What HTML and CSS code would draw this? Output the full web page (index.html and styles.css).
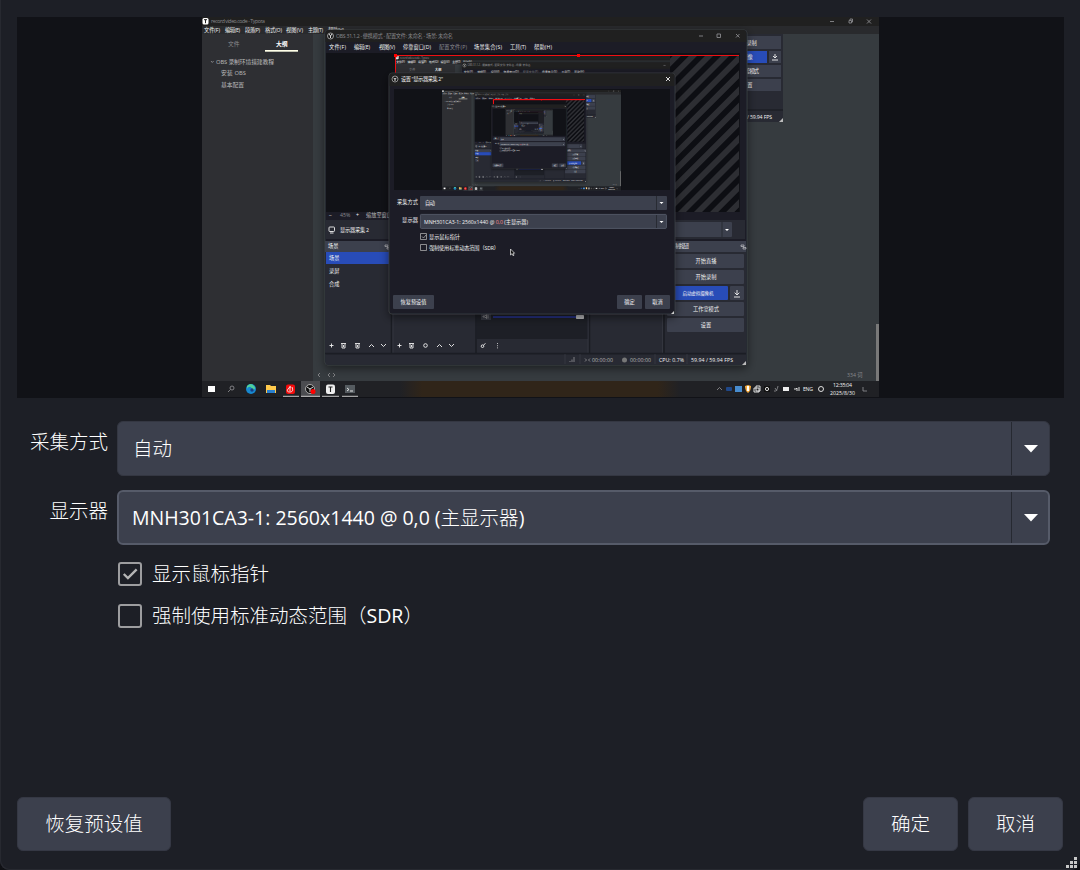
FILE: index.html
```html
<!DOCTYPE html>
<html lang="zh-CN">
<head>
<meta charset="utf-8">
<title>显示器采集</title>
<link rel="stylesheet" href="styles.css">
</head>
<body>
<main class="dialog">
<svg class="preview" viewBox="17 17 1047 381" role="img" aria-label="预览">
<defs>
<pattern id="hatch" width="11.4" height="11.4" patternUnits="userSpaceOnUse" patternTransform="rotate(45 670 55)"><rect width="11.4" height="11.4" fill="#0d0e13"/><rect width="5.7" height="11.4" fill="#2d2e33"/></pattern>
<linearGradient id="wall" x1="0" x2="1"><stop offset="0" stop-color="#202125"/><stop offset=".08" stop-color="#302519"/><stop offset=".92" stop-color="#302519"/><stop offset="1" stop-color="#202125"/></linearGradient>
<filter id="shade" x="-20%" y="-20%" width="140%" height="140%"><feDropShadow dx="0" dy="3" stdDeviation="5" flood-color="#000" flood-opacity=".5"/></filter>
<clipPath id="screen"><rect x="202" y="17" width="677" height="380"/></clipPath>
<clipPath id="canvas"><rect x="395" y="55" width="275" height="157"/></clipPath>

<g id="desktop" clip-path="url(#screen)">
<rect x="202" y="17" width="677" height="380" fill="#363b3f"/>
<rect x="202" y="17" width="677" height="9" fill="#202020"/>
<rect x="202" y="26" width="677" height="8" fill="#292a2d"/>
<rect x="202" y="34" width="111" height="347" fill="#2e2f33"/>
<rect x="202.500" y="18" width="6" height="6.500" rx="1.500" fill="#fff"/><path d="M204 19.700h3M205.500 19.700v3.500" stroke="#222" stroke-width="1"/>
<g class="t5 dim"><text x="211" y="23.300" textLength="54">record video.code - Typora</text></g>
<g class="t5"><text x="204" y="32.300" textLength="16">文件(F)</text><text x="225" y="32.300" textLength="15">编辑(E)</text><text x="245" y="32.300" textLength="15">段落(P)</text><text x="265" y="32.300" textLength="17">格式(O)</text><text x="286" y="32.300" textLength="17">视图(V)</text><text x="308" y="32.300" textLength="15">主题(T)</text><text x="328" y="32.300" textLength="16">帮助(H)</text></g>
<g class="t6"><text x="228" y="45.500" class="dim">文件</text><text x="276" y="45.500" class="bold">大纲</text><text x="216" y="64" class="soft" textLength="58">OBS 录制环境搭建教程</text><text x="221" y="75" class="soft" textLength="25">安装 OBS</text><text x="221" y="87" class="soft" textLength="23">基本配置</text></g>
<path d="M211 61l1.300 1.500 1.300-1.500" class="line dimline"/><rect x="265" y="50" width="33" height="1.700" fill="#ffffe8"/>
<path d="M830 21.500h4M849 20.500h2.500v2.500H849zM850 20v-1h2.500v3h-1M867 19.500l4 4m0-4l-4 4" class="line dimline"/>
<rect x="876" y="324" width="3" height="57" fill="#797979"/>
<g class="t5 dim"><text x="847" y="377">334 词</text></g><path d="M320 373l-2 2 2 2M330 373l-2 2 2 2M333 373l2 2-2 2" class="line dimline"/>

<rect x="730" y="34" width="53" height="88" fill="#282a33"/><rect x="730" y="36" width="51" height="13" fill="#3c404d"/><rect x="730" y="51" width="37" height="12" fill="#284cb8"/><rect x="769" y="51" width="12" height="12" fill="#3c404d"/><rect x="730" y="65" width="51" height="12" fill="#3c404d"/><rect x="730" y="79" width="51" height="12" fill="#3c404d"/><path d="M730 110h53" stroke="#17191f"/><path d="M775 54v4m-2-2l2 2 2-2M772 60h6" class="line"/><path d="M783 118v4h-4z" fill="#bbb"/>
<g class="t5"><text x="736" y="44.500">开始录制</text><text x="732" y="59">虚拟摄像</text><text x="738" y="73" textLength="21">工作室模式</text><text x="742" y="87">设置</text><text x="747" y="119" textLength="25">/ 59.94 FPS</text></g>

<rect x="325" y="30" width="422" height="335" rx="3" fill="#1d1f27" stroke="#393c42" stroke-width=".8" filter="url(#shade)"/>
<path d="M325.400 42v-9q0-3 3-3h415q3 0 3 3v9z" fill="#202020"/>
<circle cx="330.500" cy="36" r="3" fill="#161616" stroke="#bbb" stroke-width=".8"/><path d="M329 34l1.500 2v2M332 34l-1.500 2" class="line"/>
<g class="t5 dim"><text x="336" y="37.800" textLength="117">OBS 31.1.2 - 便携模式 - 配置文件: 未命名 - 场景: 未命名</text></g>
<path d="M699 36h4M717 34h3.500v3.500H717zM736 34l3.500 3.500m0-3.500l-3.500 3.500" class="line dimline"/>
<g class="t5"><text x="329" y="49.300" textLength="17">文件(F)</text><text x="354" y="49.300" textLength="16">编辑(E)</text><text x="379" y="49.300" textLength="16">视图(V)</text><text x="403" y="49.300" textLength="28">停靠窗口(D)</text><text x="439" y="49.300" textLength="28" class="dim">配置文件(P)</text><text x="474" y="49.300" textLength="28">场景集合(S)</text><text x="510" y="49.300" textLength="16">工具(T)</text><text x="534" y="49.300" textLength="18">帮助(H)</text></g>
<rect x="326" y="53" width="414" height="159" fill="#111217"/>
<rect x="670" y="55" width="69" height="157" fill="url(#hatch)"/>
<path d="M395.500 212V55.500H739" fill="none" stroke="#f00e12" stroke-width="1"/><path d="M394 54h3v3h-3zM577 54h3v3h-3z" fill="#f00"/>
<g class="t5"><text x="329" y="217">−</text><text x="340" y="217" class="dim">45%</text><text x="356" y="217">+</text><text x="366" y="217" class="soft">缩放至窗口</text></g>
<rect x="326" y="220" width="419" height="19" fill="#282a33"/><rect x="329" y="227" width="5.500" height="4.500" rx=".8" class="line"/><path d="M330 233h3.500" class="line"/><g class="t5"><text x="340" y="231.500" textLength="29">显示器采集 2</text></g>
<rect x="600" y="222" width="132" height="15" rx="1" fill="#3c404d"/><path d="M722 222v15" stroke="#272a33"/><path d="M725 229h4l-2 2z" fill="#fff"/>
<rect x="325" y="241" width="421" height="112" fill="#282a33"/><path d="M325 241h421v11H325z" fill="#3c404d"/>
<g class="t5"><text x="328" y="248.300">场景</text><text x="675" y="248.300" textLength="14">制按钮</text></g>
<path d="M385 245h3v1.500h-3zM387 247.500h3v1.500h-3zM741 245h3v1.500h-3zM743 247.500h3v1.500h-3z" class="line thin"/>
<rect x="326" y="252" width="64" height="12" fill="#284cb8"/><g class="t5"><text x="329" y="260">场景</text><text x="329" y="273">录屏</text><text x="329" y="286">合成</text></g>
<path d="M391.500 241v112M476 241v112M589.500 241v112M664 241v112" stroke="#1a1c23" stroke-width="1.500"/><path d="M393 252v101M588 252v101M662.500 252v101" stroke="#3a3d46" stroke-width=".6"/>
<rect x="476.500" y="313" width="111" height="26" fill="#1d1f26"/>
<path d="M329.500 345.500h4M331.500 343.500v4M341 343.500h5M342 344v4h3v-4M343.500 345v2M355 343.500h5M356 344v4h3v-4M357.500 345v2M369 347l2.500-2.500 2.500 2.500M381 344l2.500 2.500 2.500-2.500M397.500 345.500h4M399.500 343.500v4M409 343.500h5M410 344v4h3v-4M411.500 345v2M437 347l2.500-2.500 2.500 2.500M449 344l2.500 2.500 2.500-2.500M497.500 343v.8M497.500 345.400v.8M497.500 347.500v.8" class="line"/><circle cx="425.500" cy="345.500" r="1.800" class="line"/><circle cx="482.500" cy="346.200" r="1.300" class="line"/><path d="M483.500 345l2-1.500" class="line"/>
<rect x="481" y="312" width="10" height="8" fill="#333640"/><path d="M483 316h2l1.500-1.500v4L485 317h-2zM488 314.500v4" class="line dimline"/><path d="M493 317h86" stroke="#2837a0" stroke-width="1.600"/><rect x="576" y="315" width="8" height="4" rx=".8" fill="#b9b9bb"/>
<rect x="667" y="254" width="77" height="14" rx="1" fill="#3c404d"/><rect x="667" y="270" width="77" height="14" rx="1" fill="#3c404d"/><rect x="667" y="286" width="61" height="14" rx="1" fill="#284cb8"/><rect x="730" y="286" width="14" height="14" rx="1" fill="#3c404d"/><rect x="667" y="302" width="77" height="14" rx="1" fill="#3c404d"/><rect x="667" y="318" width="77" height="14" rx="1" fill="#3c404d"/>
<path d="M737 290v5m-2.300-2.300l2.300 2.300 2.300-2.300M734 297h6" class="line"/>
<g class="t5 mid"><text x="706" y="263.200" textLength="21">开始直播</text><text x="706" y="279.200" textLength="21">开始录制</text><text x="698" y="295.200" class="tight" textLength="31">启动虚拟摄像机</text><text x="706" y="311.200" textLength="26">工作室模式</text><text x="706" y="327.200">设置</text></g>
<path d="M325 353.500h421" stroke="#1b1d24" stroke-width="1.500"/><rect x="326" y="354.500" width="420" height="10" fill="#282a33"/><path d="M565 354v10M580 354v10M655 354v10M687 354v10" stroke="#3a3d46" stroke-width=".7"/>
<path d="M570 362v-1M572 362v-2.500M574 362v-5" class="line dimline"/><circle cx="624.500" cy="360" r="2.500" fill="#777"/><path d="M585 358.500l1.500 1.500-1.500 1.500m5-3l-1.500 1.500 1.500 1.500" class="line dimline"/>
<g class="t5"><text x="592" y="361.900" textLength="21" class="soft">00:00:00</text><text x="630" y="361.900" textLength="21" class="soft">00:00:00</text><text x="659" y="361.900" textLength="25">CPU: 0.7%</text><text x="691" y="361.900" textLength="42">59.94 / 59.94 FPS</text></g><path d="M746 361v4h-4z" fill="#bbb"/>

<rect x="202" y="381" width="677" height="16" fill="#202125"/><rect x="400" y="381" width="280" height="16" fill="url(#wall)"/>
<rect x="301" y="381" width="19" height="16" fill="#4b4c50"/><path d="M283 396.300h16M301 396.300h19M322 396.300h17M342 396.300h16" stroke="#c4c4c4" stroke-width="1"/>
<rect x="208" y="386" width="7" height="6" fill="#fff"/><circle cx="232" cy="388" r="2" class="line dimline"/><path d="M230.500 389.500l-2.500 2.500" class="line dimline"/>
<circle cx="251" cy="389" r="5" fill="#1788cf"/><path d="M247 386q4-4 7 0c2 2 1 4-2 4 0-4-4-4-5-1z" fill="#4fd09a"/><circle cx="252" cy="390" r="1.700" fill="#173d83"/>
<path d="M266 385h4l1 1h5v7h-10z" fill="#ffca4c"/><path d="M267 390h8v3h-8z" fill="#2980cf"/>
<rect x="286" y="384.500" width="9" height="9.500" rx="2" fill="#f30b0b"/><path d="M290 386v5M292 387q2 5-2 5t-2-3 3-2" class="line"/>
<circle cx="310" cy="389" r="4.500" fill="#111" stroke="#ddd" stroke-width=".7"/><path d="M307 387l3 2 3-2M310 389v3" class="line"/><circle cx="313" cy="391.500" r="2.500" fill="#f00"/>
<rect x="326" y="384.500" width="9" height="9.500" rx="2" fill="#eee"/><path d="M328.500 387h4M330.500 387v5" stroke="#222" stroke-width="1.100"/>
<rect x="345" y="385" width="10" height="8" fill="#555b60"/><path d="M347 388l2 1.500-2 1.500M350 391h3" class="line"/>
<path d="M717 390l2.500-2.500 2.500 2.500" class="line dimline"/><rect x="726" y="387" width="6" height="4" rx="1" fill="#204888"/><rect x="735" y="386" width="7" height="6" fill="#488cce"/><path d="M745 386l3-1 3 1q0 5-3 7-3-2-3-7" fill="#f2a93d"/><path d="M747 386h2v5h-2z" fill="#fff"/><path d="M756 386h4v5h-4zM754 388h5v4h-5z" class="line"/><rect x="764" y="386" width="6" height="6" fill="#111"/><circle cx="767" cy="389" r="1.600" class="line"/><path d="M774 391q3 1 4-5M775 388l2 3" class="line dimline"/><rect x="783" y="387" width="6" height="4" fill="#eee"/><path d="M794 389h2l1-1v3M799 387v4" class="line"/>
<g class="t5"><text x="803" y="391" textLength="10">ENG</text><text x="833" y="387" textLength="19">12:35:04</text><text x="830" y="395" textLength="25">2025/8/30</text></g><circle cx="821" cy="389" r="2.500" class="line"/><path d="M863 387v4h4" class="line dimline"/>
</g>

<g id="settings">
<rect x="389" y="73" width="286" height="241" rx="3" fill="#1d1f26" stroke="#3a3b3f" stroke-width=".8" filter="url(#shade)"/>
<path d="M389.500 86V76q0-2.500 2.500-2.500h280q2.500 0 2.500 2.500v10z" fill="#202020"/>
<circle cx="395" cy="79" r="3" fill="#111" stroke="#aaa" stroke-width=".8"/><path d="M393.500 78l1.500 1 1.500-1M395 79v2" class="line"/>
<g class="t5"><text x="401" y="81" textLength="42">设置 "显示器采集 2"</text></g><path d="M666 77l4 4m0-4l-4 4" class="line"/>
<rect x="394" y="89" width="276" height="101" fill="#111217"/>
<rect x="420" y="196" width="247" height="14" rx="1" fill="#3c404d"/><rect x="420.400" y="214.400" width="246" height="14" rx="1" fill="#3c404d" stroke="#5b6170" stroke-width=".8"/><path d="M656.500 196v14M656.500 215v13" stroke="#282b33"/><path d="M659.500 202h4l-2 2zM659.500 221h4l-2 2z" fill="#fff"/>
<g class="t5"><text x="397" y="204" textLength="21">采集方式</text><text x="425" y="205" textLength="10">自动</text><text x="402" y="221.500" textLength="16">显示器</text><text x="424" y="223.500" textLength="104">MNH301CA3-1: 2560x1440 @ <tspan fill="#ff8b8b">0,0</tspan> (主显示器)</text><text x="429" y="238.500" textLength="31">显示鼠标指针</text><text x="429" y="249.500" textLength="70">强制使用标准动态范围（SDR）</text></g>
<path d="M420.500 233.500h6v6h-6zM422 236.500l1.500 1.500 2.500-3M420.500 244.500h6v6h-6z" class="line softline"/>
<rect x="393" y="295" width="41" height="14" rx="1" fill="#3c404d"/><rect x="617" y="295" width="25" height="14" rx="1" fill="#3c404d"/><rect x="645" y="295" width="25" height="14" rx="1" fill="#3c404d"/>
<g class="t5 mid"><text x="413.500" y="304" textLength="26">恢复预设值</text><text x="629.500" y="304">确定</text><text x="657.500" y="304">取消</text></g>
<path d="M674 311v3h-3z" fill="#ccc"/>
</g>
<g id="level3"><use href="#desktop"/><use href="#settings"/></g>
<g id="level2"><use href="#level3"/><use href="#level3" transform="translate(388.600 85.500) scale(.2645)"/></g>
</defs>
<use href="#desktop"/>
<g clip-path="url(#canvas)"><use href="#desktop" transform="translate(286 46) scale(.54)"/></g>
<path d="M395.500 212V55.500H739" fill="none" stroke="#f00e12"/><path d="M394 54h3v3h-3zM577 54h3v3h-3z" fill="#f00"/>
<use href="#settings"/>
<use href="#level2" transform="translate(388.600 85.500) scale(.2645)"/>
<path d="M493.500 104V99.500H585" fill="none" stroke="#f00e12"/>
<path d="M510.500 249v6l1.500-1.300 1 2 1-.5-1-2h1.600z" fill="#111" stroke="#eee" stroke-width=".7"/>
</svg>

<form class="form">
<label class="label">采集方式</label>
<div class="select"><span class="value">自动</span><span class="arrow"><svg viewBox="0 0 14 8"><path d="M0 0h14L7 7.500z" fill="#fff"/></svg></span></div>
<label class="label">显示器</label>
<div class="select focused"><span class="value"><span class="latin">MNH301CA3-1: 2560x1440 @ 0,0 (</span>主显示器<span class="latin">)</span></span><span class="arrow"><svg viewBox="0 0 14 8"><path d="M0 0h14L7 7.500z" fill="#fff"/></svg></span></div>
<div class="checks">
<div class="check"><span class="box"><svg viewBox="0 0 24 24"><path d="M4.500 12l5 5L20 6.500" fill="none" stroke="#b5b5b5" stroke-width="2.800"/></svg></span><span class="check-text">显示鼠标指针</span></div>
<div class="check"><span class="box"></span><span class="check-text">强制使用标准动态范围（<span class="latin">SDR</span>）</span></div>
</div>
</form>
<footer class="actions"><button class="button reset">恢复预设值</button><button class="button">确定</button><button class="button">取消</button></footer>
<svg class="grip" viewBox="0 0 11 11"><path d="M8 0h3v3H8zM4 4h3v3H4zM8 4h3v3H8zM0 8h3v3H0zM4 8h3v3H4zM8 8h3v3H8z" fill="#c8c8c8"/></svg>
</main>
</body>
</html>
```
FILE: styles.css
```css
* { box-sizing: border-box; }
body { margin: 0; background: #101115; color: #fff; overflow: hidden; font-family: "Open Sans", "Noto Sans CJK SC", sans-serif; }
.dialog { position: relative; width: 1080px; height: 870px; padding: 17px 17px 19px; display: flex; flex-direction: column; background: #1d1f26; border-radius: 0 0 9px 9px; box-shadow: inset 1px -1px 0 #272930; }
.preview { display: block; width: 1047px; height: 381px; flex: none; background: #111217; }
.form { display: grid; grid-template-columns: 91px 933px; grid-template-rows: 55px 55px auto; column-gap: 9px; row-gap: 14px; margin-top: 23px; font-size: 19.5px; font-weight: 300; }
.label { text-align: right; line-height: 27px; padding-top: 7px; }
.select { display: flex; align-items: stretch; background: #3c404d; border: 1px solid #343742; border-radius: 6px; line-height: 53px; overflow: hidden; }
.focused { border: 2px solid #565b69; line-height: 51px; }
.latin { font-weight: 400; }
.value { flex: 1; padding-left: 15px; }
.focused .value { padding-left: 13px; }
.arrow { width: 38px; border-left: 1px solid #262931; display: flex; align-items: center; justify-content: center; }
.focused .arrow { width: 37px; padding-left: 1px; }
.arrow svg { width: 14px; height: 8px; }
.checks { grid-column: 2; display: flex; flex-direction: column; gap: 12px; padding: 0 1px; }
.check { display: flex; align-items: center; gap: 10px; height: 30px; white-space: nowrap; }
.check-text { padding-bottom: 3px; }
.box { width: 24px; height: 24px; margin-bottom: 1px; border: 2px solid #9d9d9f; border-radius: 3px; display: flex; }
.box svg { width: 20px; height: 20px; }
.actions { display: flex; gap: 10px; margin-top: auto; width: 1046px; }
.button { width: 95px; height: 54px; padding: 0 0 3px; border: 1px solid #353844; border-radius: 6px; background: #3c404d; color: #fff; font: 300 19.5px "Open Sans", "Noto Sans CJK SC", sans-serif; }
.reset { width: 154px; margin-right: auto; }
.grip { position: absolute; right: 3px; bottom: 2px; width: 11px; height: 11px; }
.t5 { font-size: 5.2px; fill: #f4f4f4; }
.t6 { font-size: 5.8px; fill: #eee; }
.tight { font-size: 4.5px; }
.dim { fill: #8a8a8e; }
.soft { fill: #bbb; }
.bold { font-weight: 700; fill: #fff; }
.mid { text-anchor: middle; }
.line { fill: none; stroke: #f2f2f2; stroke-width: .9; }
.dimline { stroke: #89898c; }
.softline { stroke: #bbb; stroke-width: .7; }
.thin { stroke-width: .5; }
```
